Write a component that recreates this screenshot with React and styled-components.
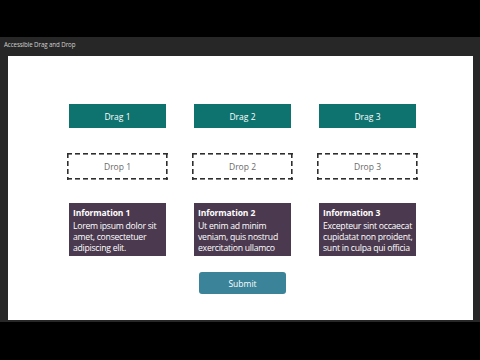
import React from 'react';
import styled, { createGlobalStyle } from 'styled-components';

const Global = createGlobalStyle`
  html, body { margin: 0; padding: 0; background: #000; }
  body { font-family: "Open Sans", "Noto Sans", sans-serif; }
  * { box-sizing: border-box; }
`;

const Screen = styled.div`
  width: 480px; height: 360px; background: #000;
  display: flex; flex-direction: column;
  padding-top: 37px;
`;

const Window = styled.div`
  height: 285px; background: #272727;
  display: flex; flex-direction: column;
  padding: 0 7px 2px 8px;
`;

const TitleBar = styled.div`
  height: 19px; color: #d0d0d0; font-size: 6.2px; letter-spacing: -0.1px;
  padding-top: 3px; margin-left: -4px;
`;

const Canvas = styled.div`
  flex: 1; background: #fff;
  display: flex; flex-direction: column; align-items: center;
  padding-top: 48px; padding-left: 4px;
`;

const Row = styled.div`
  display: grid; grid-template-columns: repeat(3, 97px); column-gap: 28px;
  margin-bottom: ${p => p.$mb}px;
`;

const DragItem = styled.div`
  height: 24px; background: #0e726f; color: #fff;
  font-size: 8.5px; display: flex; align-items: center; justify-content: center;
`;

const dash = '#2e2e2e';
const DropZone = styled.div`
  height: 27px; margin: 0 -2px;
  color: #6a6a6a; font-size: 8.5px;
  display: flex; align-items: center; justify-content: center;
  background-image:
    repeating-linear-gradient(90deg, ${dash} 0 5px, transparent 5px 8px),
    repeating-linear-gradient(90deg, ${dash} 0 5px, transparent 5px 8px),
    repeating-linear-gradient(180deg, ${dash} 0 5px, transparent 5px 8px),
    repeating-linear-gradient(180deg, ${dash} 0 5px, transparent 5px 8px);
  background-size: 100% 1.6px, 100% 1.6px, 1.6px 100%, 1.6px 100%;
  background-position: 0 0, 0 100%, 0 0, 100% 0;
  background-repeat: no-repeat;
`;

const InfoCard = styled.div`
  height: 53px; background: #4b3a4f; color: #fff;
  padding: 4px 3px 0 4px;
`;

const InfoTitle = styled.div`
  font-weight: 700; font-size: 8.5px; line-height: 11px; margin-bottom: 2.5px;
  letter-spacing: -0.1px;
`;

const InfoBody = styled.div`
  font-size: 8.7px; line-height: 11.3px; white-space: nowrap; letter-spacing: -0.27px;
`;

const SubmitButton = styled.button`
  width: 87px; height: 22px; border: none; border-radius: 3px;
  background: #3a8399; color: #fff; font-family: inherit; font-size: 8.5px;
`;

const items = [
  { title: 'Information 1', lines: ['Lorem ipsum dolor sit', 'amet, consectetuer', 'adipiscing elit.'] },
  { title: 'Information 2', lines: ['Ut enim ad minim', 'veniam, quis nostrud', 'exercitation ullamco'] },
  { title: 'Information 3', lines: ['Excepteur sint occaecat', 'cupidatat non proident,', 'sunt in culpa qui officia'] },
];

export default function App() {
  return (
    <Screen>
      <Global />
      <Window>
        <TitleBar>Accessible Drag and Drop</TitleBar>
        <Canvas>
          <Row $mb={25}>
            {[1, 2, 3].map(n => <DragItem key={n}>Drag {n}</DragItem>)}
          </Row>
          <Row $mb={23}>
            {[1, 2, 3].map(n => <DropZone key={n}>Drop {n}</DropZone>)}
          </Row>
          <Row $mb={16}>
            {items.map(it => (
              <InfoCard key={it.title}>
                <InfoTitle>{it.title}</InfoTitle>
                <InfoBody>{it.lines.map(l => <div key={l}>{l}</div>)}</InfoBody>
              </InfoCard>
            ))}
          </Row>
          <SubmitButton>Submit</SubmitButton>
        </Canvas>
      </Window>
    </Screen>
  );
}
